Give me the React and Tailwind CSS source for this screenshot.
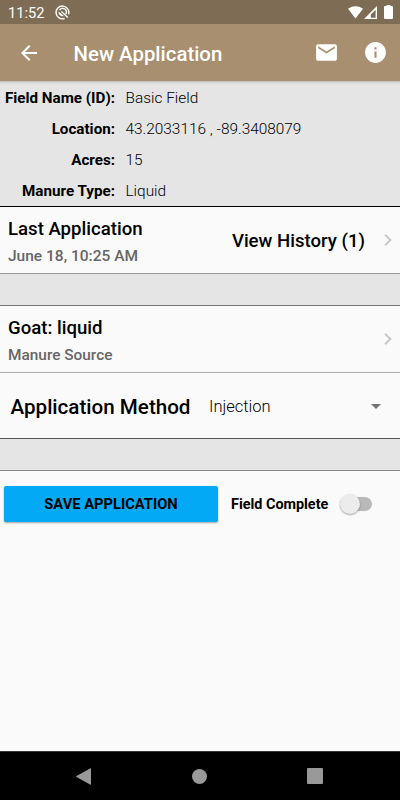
const fields = [
  ["Field Name (ID):", "Basic Field"],
  ["Location:", "43.2033116 , -89.3408079"],
  ["Acres:", "15"],
  ["Manure Type:", "Liquid"],
];

function Chevron() {
  return (
    <svg className="h-[12px] w-[8px] shrink-0" viewBox="0 0 8 12" fill="none" stroke="#c7c7cc" strokeWidth="1.9">
      <path d="M1 .8 6.4 6 1 11.2" />
    </svg>
  );
}

function StatusBar() {
  return (
    <div className="flex h-6 items-center bg-[#7f6c54] pl-2 pr-[7px] text-white">
      <span className="text-[14.6px] leading-6 pt-[2px]">11:52</span>
      <svg className="ml-[10.5px] h-[15px] w-[15px]" viewBox="0 0 15 15" fill="none" stroke="white">
        <path d="M9.6 13.5A6.4 6.4 0 1 1 13.6 9.3" strokeWidth="1.4" />
        <path d="M4.6 5.1A3.7 3.7 0 1 1 10.6 9.4" strokeWidth="1.4" />
        <path d="M6.4 6.4 12.8 12.6" strokeWidth="1.4" />
        <path d="M3.6 6.6 8.8 11A3.9 3.9 0 0 1 3.6 6.6Z" fill="white" stroke="none" />
      </svg>
      <svg className="ml-auto h-[13px] w-[15px]" viewBox="0 0 15 13" fill="white">
        <path d="M0 2.7Q7.5-2.2 15 2.7L7.5 12.5Z" />
      </svg>
      <svg className="ml-[1px] h-[13px] w-[14px]" viewBox="0 0 14 13">
        <path d="M13 0V13H0Z" fill="white" />
        <path d="M11.6 3.8V11.7H6.8V8.6Z" fill="#7f6c54" />
      </svg>
      <svg className="ml-[6px] h-[14px] w-[9px]" viewBox="0 0 9 14" fill="white">
        <path d="M2.5 0h4v1H8q1 0 1 1v11q0 1-1 1H1q-1 0-1-1V2q0-1 1-1h1.5Z" />
      </svg>
    </div>
  );
}

function Header() {
  return (
    <header className="flex h-[57px] items-center bg-[#a88f70] pl-[16.5px] pr-[12px] text-white">
      <svg className="h-6 w-6" viewBox="0 0 24 24" fill="currentColor">
        <path d="M20 11H7.83l5.59-5.59L12 4l-8 8 8 8 1.41-1.41L7.83 13H20v-2z" />
      </svg>
      <h1 className="ml-[33px] pt-[3px] text-[20.4px] font-medium leading-6 whitespace-nowrap">New Application</h1>
      <svg className="ml-auto h-[25px] w-[25px]" viewBox="0 0 24 24" fill="currentColor">
        <path d="M20 4H4c-1.1 0-1.99.9-1.99 2L2 18c0 1.1.9 2 2 2h16c1.1 0 2-.9 2-2V6c0-1.1-.9-2-2-2zm0 4l-8 5-8-5V6l8 5 8-5v2z" />
      </svg>
      <svg className="ml-[24px] h-[25px] w-[25px]" viewBox="0 0 24 24" fill="currentColor">
        <path d="M12 2C6.48 2 2 6.48 2 12s4.48 10 10 10 10-4.48 10-10S17.52 2 12 2zm1 15h-2v-6h2v6zm0-8h-2V7h2v2z" />
      </svg>
    </header>
  );
}

export default function App() {
  return (
    <div className="flex h-[800px] w-[400px] flex-col overflow-hidden bg-[#fafafa] font-[Roboto,sans-serif] text-black">
      <StatusBar />
      <Header />
      <section className="h-[126px] shrink-0 border-b border-black bg-[#e5e5e5] pt-[2px] shadow-[inset_0_3px_3px_-2px_rgba(0,0,0,0.2)]">
        {fields.map(([label, value]) => (
          <div key={label} className="flex h-[31px] items-center">
            <span className="w-[115px] text-right text-[15.2px] font-bold whitespace-nowrap">{label}</span>
            <span className="ml-[10.5px] text-[15.4px] font-light whitespace-nowrap">{value}</span>
          </div>
        ))}
      </section>
      <section className="flex h-[67px] shrink-0 items-center border-b border-[#999] pl-2 pr-[8px]">
        <div className="whitespace-nowrap pt-[5px]">
          <div className="text-[18.6px] font-medium leading-[27px]">Last Application</div>
          <div className="text-[15.5px] font-medium leading-[27px] text-[#666]">June 18, 10:25 AM</div>
        </div>
        <div className="ml-auto mr-[19px] pt-[4px] text-[18.6px] font-medium whitespace-nowrap">View History (1)</div>
        <Chevron />
      </section>
      <div className="h-[32px] shrink-0 border-b border-[#777] bg-[#e5e5e5]" />
      <section className="flex h-[67px] shrink-0 items-center justify-between border-b border-[#aaa] pl-2 pr-[8px]">
        <div className="whitespace-nowrap pt-[6px]">
          <div className="text-[18.6px] font-medium leading-[27px]">Goat: liquid</div>
          <div className="text-[15.4px] font-medium leading-[27px] text-[#666]">Manure Source</div>
        </div>
        <Chevron />
      </section>
      <section className="flex h-[66px] shrink-0 items-center border-b border-[#555] pl-[10.5px] pr-[19px] pt-[3px] whitespace-nowrap">
        <span className="w-[198.5px] text-[20.6px] font-medium">Application Method</span>
        <span className="text-[16.5px] font-light">Injection</span>
        <svg className="ml-auto h-[5px] w-[10px] -translate-y-px" viewBox="0 0 10 5" fill="#737373">
          <path d="M0 0h10L5 5Z" />
        </svg>
      </section>
      <div className="h-[32px] shrink-0 border-b border-[#888] bg-[#e5e5e5]" />
      <section className="flex grow items-start pl-1 pt-[15px]">
        <button className="h-[36px] w-[214px] rounded-[2px] bg-[#03a9f4] pt-px text-[14.7px] font-bold shadow-[0_1px_2px_rgba(0,0,0,0.35)] whitespace-nowrap">
          SAVE APPLICATION
        </button>
        <div className="ml-[13px] flex h-[36px] items-center">
          <span className="w-[109px] pt-[2px] text-[14.4px] font-bold whitespace-nowrap">Field Complete</span>
          <div className="flex h-[14px] w-[32px] items-center rounded-full bg-[#b9b9b9]">
            <div className="h-5 w-5 shrink-0 rounded-full bg-[#ececec] shadow-[0_1px_2px_rgba(0,0,0,0.35)]" />
          </div>
        </div>
      </section>
      <nav className="flex h-[49px] shrink-0 items-center border-t border-[#333] bg-black pl-[76px]">
        <svg className="h-[17px] w-[15px]" viewBox="0 0 15 17" fill="#999">
          <path d="M14 .5q1-.6 1 .5v15q0 1-1 .5L.5 9q-.7-.5 0-1Z" />
        </svg>
        <div className="ml-[101px] h-[15px] w-[15px] rounded-full bg-[#999]" />
        <div className="ml-[100px] h-4 w-4 rounded-[1px] bg-[#999]" />
      </nav>
    </div>
  );
}
